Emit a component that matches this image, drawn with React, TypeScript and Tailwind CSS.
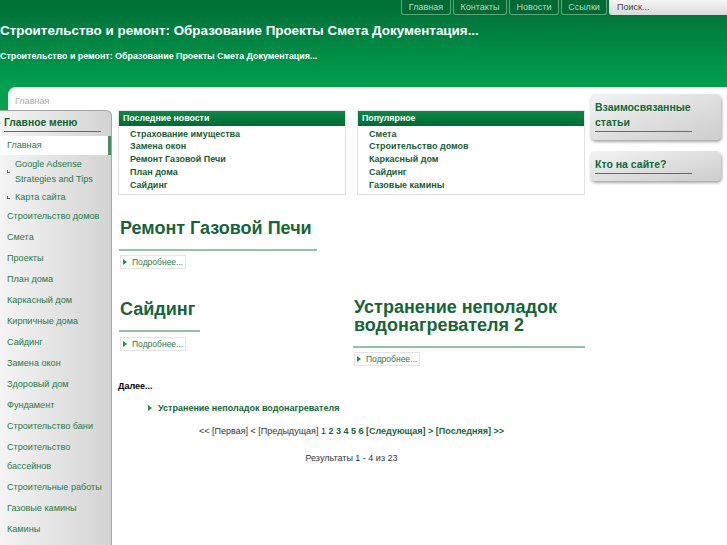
import type { ReactNode } from 'react'

const tabs = [
  { label: 'Главная', w: 'w-[50px]' },
  { label: 'Контакты', w: 'w-[54px]' },
  { label: 'Новости', w: 'w-[50px]' },
  { label: 'Ссылки', w: 'w-[46px]' },
]

const menu = [
  'Строительство домов',
  'Смета',
  'Проекты',
  'План дома',
  'Каркасный дом',
  'Кирпичные дома',
  'Сайдинг',
  'Замена окон',
  'Здоровый дом',
  'Фундамент',
  'Строительство бани',
  'Строительство бассейнов',
  'Строительные работы',
  'Газовые камины',
  'Камины',
]

const latest = ['Страхование имущества', 'Замена окон', 'Ремонт Газовой Печи', 'План дома', 'Сайдинг']
const popular = ['Смета', 'Строительство домов', 'Каркасный дом', 'Сайдинг', 'Газовые камины']

function Arrow() {
  return (
    <svg width="4" height="6" viewBox="0 0 4 6" className="shrink-0">
      <path d="M0 0L4 3L0 6Z" fill="#1f8c4c" />
    </svg>
  )
}

function More() {
  return (
    <div className="flex pl-[2px]">
      <span className="flex h-[14px] items-center gap-[5px] border border-[#e4e4e4] px-[2px] text-[8.5px] leading-[12px] text-[#2c7a4c]">
        <Arrow />
        Подробнее...
      </span>
    </div>
  )
}

function Title({ children }: { children: ReactNode }) {
  return (
    <h2 className="ml-px inline-block border-b-2 border-[#93c2a5] pb-[12px] pl-px pr-[5px] text-[18px] leading-[18px] font-bold text-[#146636]">
      {children}
    </h2>
  )
}

function NewsBox({ title, items }: { title: string; items: string[] }) {
  return (
    <div className="h-[85px] w-[228px] border border-[#e2e2e2] bg-white">
      <div className="h-[15px] bg-linear-to-b from-[#0b8a45] to-[#006b34] pl-[4px] text-[8.8px] leading-[15px] font-bold text-white">
        {title}
      </div>
      <ul className="pl-[11px] pt-[1.5px]">
        {items.map((it) => (
          <li key={it} className="text-[9px] leading-[12.75px] font-bold text-[#135f33]">
            {it}
          </li>
        ))}
      </ul>
    </div>
  )
}

function SideBox({ lines, h }: { lines: string[]; h: string }) {
  return (
    <div
      className={`${h} rounded-[5px] bg-linear-to-br from-[#f3f3f3] to-[#cdcdcd] px-[5px] pt-[5.5px] shadow-[1px_2px_3px_rgba(0,0,0,0.35)]`}
    >
      <h3 className="w-[97px] border-b border-[#2f8a55] pb-[1px] text-[10.5px] leading-[15px] font-bold text-[#0d6b33]">
        {lines.map((l) => (
          <span key={l} className="block whitespace-nowrap">
            {l}
          </span>
        ))}
      </h3>
    </div>
  )
}

function SubMark() {
  return <span className="mr-[5px] ml-[7px] h-[3px] w-[3px] shrink-0 border-b border-l border-[#666]" />
}

export default function App() {
  return (
    <div className="h-[545px] w-[727px] overflow-hidden bg-[#00a14f] font-['Liberation_Sans',Arial,sans-serif]">
      {/* header */}
      <div className="h-[87px] bg-linear-to-b from-[#006e36] to-[#00a14f]">
        <div className="flex h-[15px] justify-end gap-[2px]">
          {tabs.map((t) => (
            <div
              key={t.label}
              className={`${t.w} rounded-b-[3px] border border-t-0 border-[#5ea67a] bg-[#006a34] text-center text-[9px] leading-[14px] text-[#bcd9c6]`}
            >
              {t.label}
            </div>
          ))}
          <div className="w-[118px] rounded-bl-[3px] bg-linear-to-b from-[#f6f6f6] to-[#d9d9d9] pl-[8px] text-[9px] leading-[15px] text-[#444]">
            Поиск...
          </div>
        </div>
        <h1 className="mt-[8px] text-[13.4px] leading-[16px] font-bold whitespace-nowrap text-white">
          Строительство и ремонт: Образование Проекты Смета Документация...
        </h1>
        <p className="mt-[12px] text-[8.9px] leading-[10px] font-bold whitespace-nowrap text-white">
          Строительство и ремонт: Образование Проекты Смета Документация...
        </p>
      </div>

      {/* body */}
      <div className="ml-2 flex h-[458px] rounded-tl-[8px] bg-white">
        <div className="flex w-[582px] flex-col">
          <div className="h-[23px] shrink-0 pl-[7px] pt-[9px] text-[9px] leading-[10px] text-[#aaa]">Главная</div>
          <div className="flex min-h-0 flex-1">
            {/* left menu */}
            <aside className="-ml-2 w-[112px] shrink-0 rounded-tr-[6px] border-t border-r border-[#a5a5a5] bg-linear-to-r from-[#f4f4f4] to-[#d4d4d4] pt-[5px]">
              <h3 className="mx-[4px] w-[97px] border-b-[1.5px] border-[#2a8a50] pb-[1px] text-[10.3px] leading-[14px] font-bold text-[#0a6630]">
                Главное меню
              </h3>
              <ul className="mt-[4px] text-[9.1px] text-[#1c7c46]">
                <li className="border-r-[3px] border-[#3f8f5f] bg-white pl-[7px] leading-[19px]">Главная</li>
                <li className="flex items-center py-[1.5px] leading-[15px]">
                  <SubMark />
                  <span>
                    Google Adsense
                    <br />
                    Strategies and Tips
                  </span>
                </li>
                <li className="flex items-center py-[1.5px] leading-[15px]">
                  <SubMark />
                  <span>Карта сайта</span>
                </li>
                {menu.map((m) => (
                  <li key={m} className="py-px pl-[7px] leading-[19px]">
                    {m}
                  </li>
                ))}
              </ul>
            </aside>

            {/* main */}
            <main className="flex-1 pl-[6px] pr-[5px]">
              <div className="flex gap-[11px]">
                <NewsBox title="Последние новости" items={latest} />
                <NewsBox title="Популярное" items={popular} />
              </div>

              <div className="mt-[22px]">
                <Title>Ремонт Газовой Печи</Title>
                <div className="mt-[4px]">
                  <More />
                </div>
              </div>

              <div className="mt-[29px] flex gap-[6px]">
                <div className="w-[228px]">
                  <Title>Сайдинг</Title>
                  <div className="mt-[5px]">
                    <More />
                  </div>
                </div>
                <div className="flex-1">
                  <Title>Устранение неполадок водонагревателя 2</Title>
                  <div className="mt-[4px]">
                    <More />
                  </div>
                </div>
              </div>

              <div className="mt-[15px] text-[9px] leading-[10px] font-bold text-black">Далее...</div>
              <div className="mt-[12px] flex items-center gap-[6px] pl-[30px] text-[9px] leading-[10px] font-bold text-[#146636]">
                <Arrow />
                Устранение неполадок водонагревателя
              </div>

              <div className="mt-[13px] text-center text-[9px] leading-[10px] text-[#333]">
                &lt;&lt; [Первая] &lt; [Предыдущая] 1{' '}
                <span className="font-bold text-[#146636]">
                  2 3 4 5 6 [Следующая] &gt; [Последняя] &gt;&gt;
                </span>
              </div>
              <div className="mt-[17px] text-center text-[9px] leading-[10px] text-[#333]">Результаты 1 - 4 из 23</div>
            </main>
          </div>
        </div>

        {/* right column */}
        <div className="flex w-[131px] flex-col gap-[11px] pt-[7px]">
          <SideBox h="h-[46px]" lines={['Взаимосвязанные', 'статьи']} />
          <SideBox h="h-[30px]" lines={['Кто на сайте?']} />
        </div>
      </div>
    </div>
  )
}
